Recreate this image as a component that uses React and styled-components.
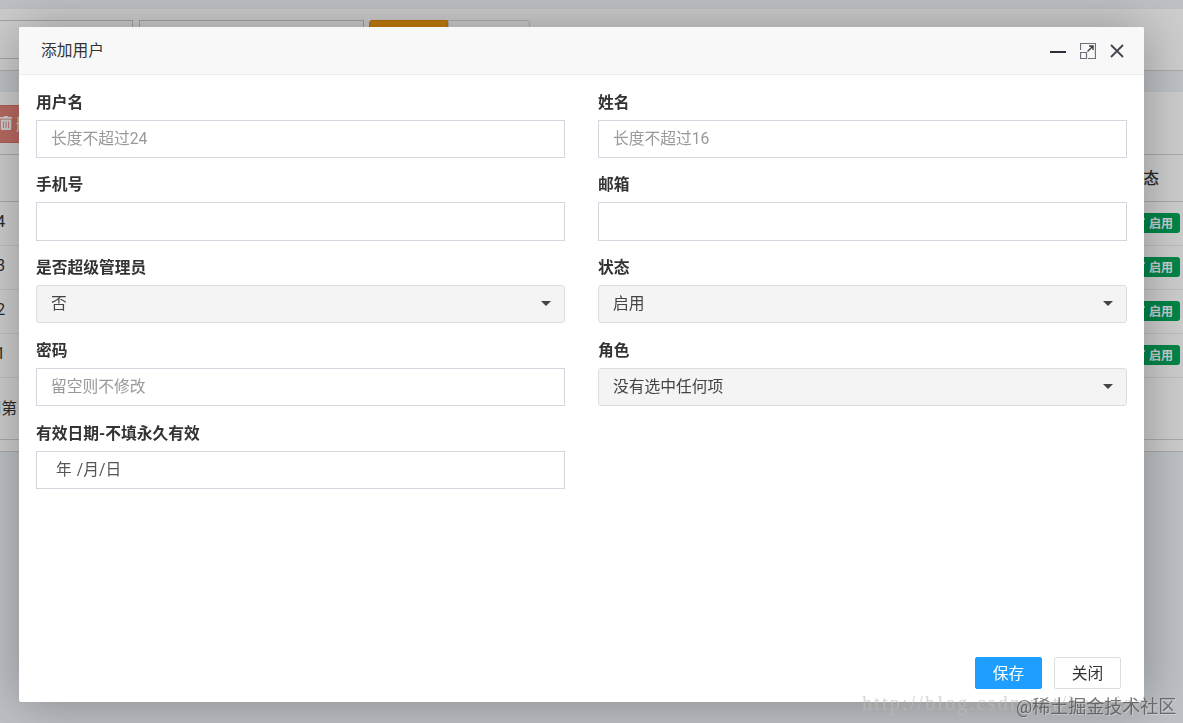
import styled, { createGlobalStyle } from "styled-components";
import { FaCheck, FaTrashAlt } from "react-icons/fa";

const FONT = `Roboto, "Noto Sans CJK SC", sans-serif`;

const rows = [4, 3, 2, 1];

const fields = [
  { label: "用户名", placeholder: "长度不超过24" },
  { label: "姓名", placeholder: "长度不超过16" },
  { label: "手机号" },
  { label: "邮箱" },
  { label: "是否超级管理员", select: "否" },
  { label: "状态", select: "启用" },
  { label: "密码", placeholder: "留空则不修改" },
  { label: "角色", select: "没有选中任何项" },
  { label: "有效日期-不填永久有效", date: true },
];

const App = () => {
  return (
    <Page>
      <GlobalStyle />

      <SearchBox>
        <SearchInput $width={133} $flush />
        <SearchInput $width={225} />
        <SearchGroup>
          <SearchButton />
          <ResetButton />
        </SearchGroup>
      </SearchBox>

      <ListBox>
        <ListTools>
          <DeleteButton>
            <FaTrashAlt size={14} />
            <span>删除</span>
          </DeleteButton>
        </ListTools>
        <HeadRow>
          <StateHead>状态</StateHead>
        </HeadRow>
        {rows.map((id) => (
          <Row key={id}>
            <IdCell>{id}</IdCell>
            <Badge>
              <FaCheck size={12} />
              启用
            </Badge>
          </Row>
        ))}
        <Pager>
          <PagerText>到第</PagerText>
        </Pager>
      </ListBox>

      <Shade />

      <Dialog>
        <DialogHeader>
          <Title>添加用户</Title>
          <WindowTools>
            <MinLine />
            <MaxIcon />
            <CloseIcon />
          </WindowTools>
        </DialogHeader>

        <Form>
          {fields.map((f) => (
            <Field key={f.label}>
              <Label>{f.label}</Label>
              {f.select ? (
                <Select>
                  {f.select}
                  <Caret />
                </Select>
              ) : f.date ? (
                <DateInput>
                  <span>年</span>
                  <span>/月/日</span>
                </DateInput>
              ) : (
                <Input placeholder={f.placeholder} />
              )}
            </Field>
          ))}
        </Form>

        <DialogFooter>
          <Button $primary>保存</Button>
          <Button>关闭</Button>
        </DialogFooter>
      </Dialog>

      <BlogMark>http://blog.csdn.net/hanxiaozi</BlogMark>
      <SiteMark>@稀土掘金技术社区</SiteMark>
    </Page>
  );
};

const MaxIcon = () => (
  <svg width="16" height="16" viewBox="0 0 16 16" fill="none">
    <path d="M.5 7V.5h15v15H8" stroke="#6f6f7b" strokeWidth="1.2" />
    <path d="M.5 9.5h6v6h-6z" stroke="#6f6f7b" strokeWidth="1.2" />
    <path d="M7.5 8.5l5-5M9 3h4v4" stroke="#3b3b47" strokeWidth="1.4" />
  </svg>
);

const CloseIcon = () => (
  <svg width="14" height="14" viewBox="0 0 14 14" fill="none">
    <path d="M1 1l12 12M13 1L1 13" stroke="#45454f" strokeWidth="1.8" />
  </svg>
);

const GlobalStyle = createGlobalStyle`
  * {
    box-sizing: border-box;
  }

  body {
    margin: 0;
    overflow: hidden;
    font-family: ${FONT};
    font-size: 15.75px;
    color: #333;
  }
`;

const Page = styled.div`
  position: relative;
  height: 723px;
  padding-top: 9px;
  overflow: hidden;
  background: #ecf0f5;
`;

const SearchBox = styled.div`
  display: flex;
  height: 62px;
  padding-top: 11px;
  background: #fff;
  border-bottom: 1px solid #d2d4d7;
`;

const SearchInput = styled.div`
  width: ${(p) => p.$width}px;
  height: 39px;
  margin-right: ${(p) => (p.$flush ? 6 : 5)}px;
  border: 1px solid #c8cad6;
  border-left-width: ${(p) => (p.$flush ? 0 : 1)}px;
`;

const SearchGroup = styled.div`
  display: flex;
  height: 39px;
`;

const SearchButton = styled.div`
  width: 79px;
  background: #f39c12;
  border: 1px solid #e08e0b;
  border-radius: 3px 0 0 3px;
`;

const ResetButton = styled.div`
  width: 82px;
  border: 1px solid #ddd;
  border-radius: 0 3px 3px 0;
`;

const ListBox = styled.div`
  height: 360px;
  margin-top: 21px;
  background: #fff;
  border-bottom: 1px solid #d2d4d7;
`;

const ListTools = styled.div`
  display: flex;
  height: 63px;
  padding-top: 13px;
  border-bottom: 1px solid #d4d4d4;
`;

const DeleteButton = styled.div`
  display: flex;
  align-items: center;
  gap: 3px;
  width: 70px;
  height: 38px;
  margin-left: -2px;
  padding-bottom: 2px;
  background: #e58479;
  border: 1px solid #dc7468;
  color: #fff;
`;

const HeadRow = styled.div`
  display: flex;
  justify-content: flex-end;
  align-items: center;
  height: 47px;
  padding: 0 24px 2px 0;
  border-bottom: 1px solid #d4d4d4;
`;

const StateHead = styled.span`
  font-weight: 500;
`;

const Row = styled.div`
  display: flex;
  align-items: center;
  justify-content: space-between;
  height: 44px;
  padding: 0 3px 1px 0;
  border-bottom: 1px solid #ebebeb;
`;

const IdCell = styled.span`
  display: flex;
  justify-content: flex-end;
  width: 5px;
  padding-bottom: 3px;
`;

const Badge = styled.span`
  display: flex;
  align-items: center;
  gap: 4px;
  height: 20px;
  padding: 0 7px 2px;
  background: #00a65a;
  border-radius: 3px;
  color: #fff;
  font-size: 12px;
  font-weight: 700;
`;

const Pager = styled.div`
  display: flex;
  align-items: center;
  height: 62px;
  padding-bottom: 2px;
  border-bottom: 1px solid #d4d4d4;
`;

const PagerText = styled.span`
  display: flex;
  justify-content: flex-end;
  width: 17px;
  white-space: nowrap;
`;

const Shade = styled.div`
  position: fixed;
  inset: 0;
  background: rgba(0, 0, 0, 0.2);
`;

const Dialog = styled.div`
  position: fixed;
  top: 27px;
  left: 19px;
  display: flex;
  flex-direction: column;
  width: 1125px;
  height: 675px;
  background: #fff;
  border-radius: 2px;
  box-shadow: 1px 1px 50px rgba(0, 0, 0, 0.3);
`;

const DialogHeader = styled.div`
  display: flex;
  align-items: center;
  justify-content: space-between;
  height: 48px;
  padding: 0 20px 1px 22px;
  background: #f8f8f8;
  border-bottom: 1px solid #eee;
  border-radius: 2px 2px 0 0;
`;

const Title = styled.span`
  padding-bottom: 2px;
`;

const WindowTools = styled.div`
  display: flex;
  align-items: center;
  gap: 14px;
  padding-top: 2px;
`;

const MinLine = styled.i`
  width: 16px;
  height: 2px;
  margin-top: 2px;
  background: #2e2d3c;
`;

const Form = styled.div`
  display: grid;
  grid-template-columns: 529px 529px;
  grid-auto-rows: 82.75px;
  column-gap: 33px;
  flex: 1;
  padding: 15.7px 17px 0;
`;

const Field = styled.div`
  display: flex;
  flex-direction: column;
`;

const Label = styled.label`
  height: 29px;
  line-height: 23.3px;
  font-weight: 700;
`;

const Input = styled.input`
  width: 100%;
  height: 38.25px;
  padding: 0 14px 1px;
  background: #fff;
  border: 1px solid #d2d6de;
  border-radius: 0;
  outline: none;
  font: inherit;
  color: #555;

  &::placeholder {
    color: #999;
    opacity: 1;
  }
`;

const DateInput = styled.div`
  display: flex;
  align-items: center;
  gap: 5px;
  height: 38.25px;
  padding: 0 19px 2px;
  border: 1px solid #d2d6de;
  color: #555;
`;

const Select = styled.div`
  display: flex;
  align-items: center;
  justify-content: space-between;
  height: 38.25px;
  padding: 0 13px 3px 14px;
  background: #f4f4f4;
  border: 1px solid #ddd;
  border-radius: 3px;
  color: #444;
`;

const Caret = styled.i`
  margin-top: 2px;
  border: 5px solid transparent;
  border-top-color: #444;
  border-bottom: 0;
`;

const DialogFooter = styled.div`
  display: flex;
  justify-content: flex-end;
  gap: 12px;
  padding: 0 23px 13px;
`;

const Button = styled.button`
  width: 67px;
  height: 32px;
  padding: 0 0 1px;
  background: ${(p) => (p.$primary ? "#1e9fff" : "#fff")};
  border: 1px solid ${(p) => (p.$primary ? "#1e9fff" : "#dedede")};
  border-radius: 2px;
  color: ${(p) => (p.$primary ? "#fff" : "#333")};
  font: inherit;
`;

const BlogMark = styled.div`
  position: fixed;
  left: 862px;
  top: 692px;
  font-family: "Liberation Serif", serif;
  font-size: 20px;
  line-height: 22px;
  letter-spacing: 2.2px;
  white-space: nowrap;
  color: rgba(190, 190, 180, 0.6);
`;

const SiteMark = styled.div`
  position: fixed;
  left: 1016px;
  top: 694px;
  font-size: 18px;
  line-height: 26px;
  white-space: nowrap;
  color: rgba(75, 75, 80, 0.75);
  text-shadow: 1px 1px 1px rgba(255, 255, 255, 0.35);
`;

export default App;
